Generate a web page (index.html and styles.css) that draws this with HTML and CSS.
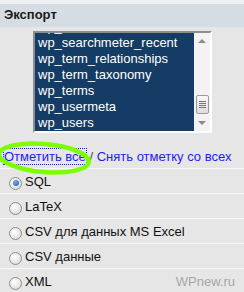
FILE: index.html
```html
<!DOCTYPE html>
<html lang="ru">
<head>
    <meta charset="UTF-8">
    <title>Экспорт</title>
    <link rel="stylesheet" href="styles.css">
</head>
<body>
    <div class="topline"></div>
    <div class="panel-head">Экспорт</div>

    <div class="export-box">
        <div class="table-select">
            <div class="table-list">
                <div class="table-item">wp_searchmeter</div>
                <div class="table-item">wp_searchmeter_recent</div>
                <div class="table-item">wp_term_relationships</div>
                <div class="table-item">wp_term_taxonomy</div>
                <div class="table-item">wp_terms</div>
                <div class="table-item">wp_usermeta</div>
                <div class="table-item">wp_users</div>
            </div>
            <div class="scrollbar">
                <span class="arrow up"></span>
                <span class="track"></span>
                <span class="thumb"><i></i><i></i><i></i><i></i></span>
                <span class="track small"></span>
                <span class="arrow down"></span>
            </div>
        </div>
    </div>

    <div class="select-links">
        <a href="#" class="focused">Отметить все</a> / <a href="#">Снять отметку со всех</a>
        <svg class="marker" width="100" height="40" viewBox="0 0 100 40">
            <ellipse cx="46" cy="19" rx="45" ry="14" transform="rotate(5 46 19)" fill="none" stroke="#7dff00" stroke-width="4.5"/>
        </svg>
    </div>

    <div class="format-list">
        <label class="format-row"><span class="radio checked"></span>SQL</label>
        <label class="format-row"><span class="radio"></span>LaTeX</label>
        <label class="format-row"><span class="radio"></span>CSV для данных MS Excel</label>
        <label class="format-row"><span class="radio"></span>CSV данные</label>
        <label class="format-row"><span class="radio"></span>XML</label>
    </div>

    <div class="watermark">WPnew.ru</div>
</body>
</html>
```

FILE: styles.css
```css
body {
    margin: 0;
    width: 244px;
    height: 292px;
    overflow: hidden;
    background: #e6e6e6;
    font-family: "Liberation Sans", Arial, sans-serif;
    font-size: 13px;
    color: #000;
    position: relative;
}
.topline {
    height: 4px;
    background: #eef1f4;
}
.panel-head {
    height: 23px;
    line-height: 22px;
    padding-left: 4px;
    background: #d5dde3;
    font-weight: bold;
    color: #1a1a1a;
}
.export-box {
    padding: 4px 0 0 33px;
}
.table-select {
    display: flex;
    width: 175px;
    height: 98px;
    border-top: 2px solid #8e8e8e;
    border-left: 2px solid #8e8e8e;
    border-right: 2px solid #fdfdfd;
    border-bottom: 2px solid #fdfdfd;
}
.table-list {
    flex: 1;
    background: #143c64;
    overflow: hidden;
    color: #fff;
    font-size: 13px;
}
.table-item {
    line-height: 16px;
    padding-left: 3px;
    white-space: nowrap;
}
.table-item:first-child {
    margin-top: -14px;
}
.scrollbar {
    width: 16px;
    background: #f3f3f3;
    display: flex;
    flex-direction: column;
    align-items: center;
}
.arrow {
    width: 0;
    height: 0;
    border-left: 4px solid transparent;
    border-right: 4px solid transparent;
    margin: 6px 0;
}
.arrow.up { border-bottom: 4px solid #8a8a8a; }
.arrow.down { border-top: 4px solid #8a8a8a; }
.track { flex: 1; }
.track.small { flex: 0 0 1px; }
.thumb {
    width: 13px;
    height: 19px;
    box-sizing: border-box;
    border: 1px solid #9a9a9a;
    border-radius: 2px;
    background: linear-gradient(#fafafa, #dcdcdc);
    display: flex;
    flex-direction: column;
    align-items: center;
    justify-content: center;
    gap: 1px;
}
.thumb i {
    display: block;
    width: 7px;
    height: 1px;
    background: #777;
}
.select-links {
    position: relative;
    margin-top: 13px;
    height: 22px;
    line-height: 22px;
    padding-left: 4px;
    white-space: nowrap;
    color: #444;
}
.select-links a {
    color: #1d1df2;
    text-decoration: none;
}
.select-links a.focused {
    outline: 1px dotted #1d1df2;
    outline-offset: 0;
}
.marker {
    position: absolute;
    left: -2px;
    top: -7px;
}
.format-list {
    border-top: 1px solid #f8f8f8;
}
.format-row {
    display: flex;
    align-items: center;
    height: 24px;
    padding-left: 9px;
    border-bottom: 1px solid #f8f8f8;
    color: #111;
}
.radio {
    width: 13px;
    height: 13px;
    box-sizing: border-box;
    border-radius: 50%;
    border: 1px solid #8d8d8d;
    background: radial-gradient(circle at 40% 35%, #ffffff, #d4d4d4);
    margin: 4px 3px 0 0;
    display: flex;
    align-items: center;
    justify-content: center;
}
.radio.checked::after {
    content: "";
    width: 6px;
    height: 6px;
    border-radius: 50%;
    background: radial-gradient(circle at 40% 35%, #6fb0ea, #1859a8);
}
.watermark {
    position: absolute;
    right: 9px;
    bottom: 3px;
    color: #a6a6a6;
    font-size: 13px;
}
```
